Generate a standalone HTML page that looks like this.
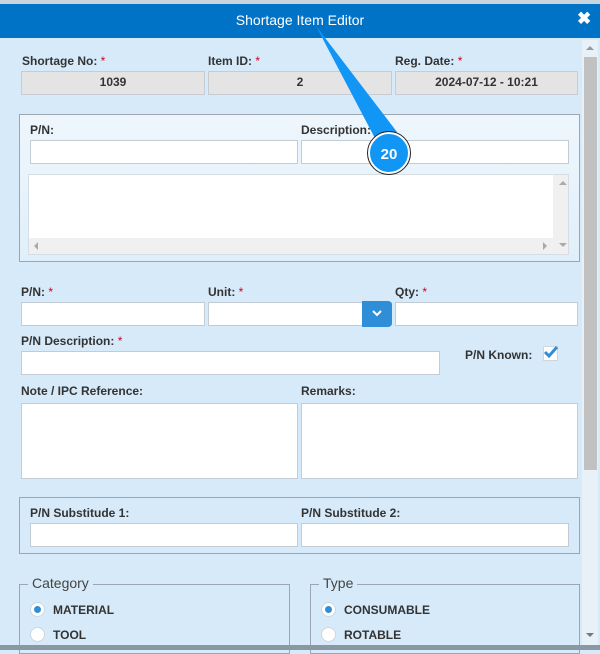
<!DOCTYPE html>
<html><head><style>
*{box-sizing:border-box;margin:0;padding:0}
body{width:600px;height:650px;overflow:hidden;background:#d6eaf9;font-family:"Liberation Sans",Arial,sans-serif;position:relative}
.a{position:absolute}
.hdr{left:0;top:0;width:600px;height:38px;background:#0073c6;border-top:4px solid #c8d4de}
.t{width:600px;text-align:center;top:12px;color:#fff;font-size:14px}
.lab{font-size:12px;font-weight:bold;color:#333}
.lab i{color:#d0021b;font-style:normal;font-weight:normal}
.in{background:#fff;border:1px solid #c3ccd4}
.ro{background:#e4e4e4;border:1px solid #c6ccd2;font-size:12px;font-weight:bold;color:#333;text-align:center;line-height:21px}
.fs{border:1px solid #9aa7b2}
.rad{width:15px;height:15px;border-radius:50%;background:#fff;border:1px solid #d0d6dc}
.rl{font-size:12px;font-weight:bold;color:#333}
</style></head><body>
<div class="a hdr"></div>
<div class="a t">Shortage Item Editor</div>
<div class="a" style="left:577px;top:9px;color:#fff;font-size:17px;font-weight:bold">✖</div>

<div class="a" style="left:582px;top:40px;width:16px;height:605px;background:#e9f1f8"></div>
<div class="a" style="left:584px;top:57px;width:13px;height:413px;background:#c1c1c1"></div>
<div class="a" style="left:586px;top:46px;width:0;height:0;border:4px solid transparent;border-bottom:4px solid #999;border-top:0"></div>
<div class="a" style="left:586px;top:633px;width:0;height:0;border:4px solid transparent;border-top:4px solid #777;border-bottom:0"></div>

<div class="a lab" style="left:22px;top:54px">Shortage No: <i>*</i></div>
<div class="a lab" style="left:208px;top:54px">Item ID: <i>*</i></div>
<div class="a lab" style="left:395px;top:54px">Reg. Date: <i>*</i></div>
<div class="a ro" style="left:21px;top:71px;width:184px;height:24px">1039</div>
<div class="a ro" style="left:208px;top:71px;width:184px;height:24px">2</div>
<div class="a ro" style="left:395px;top:71px;width:183px;height:24px">2024-07-12 - 10:21</div>

<div class="a fs" style="left:19px;top:114px;width:561px;height:148px;background:linear-gradient(#eef6fc,#e0effa)"></div>
<div class="a lab" style="left:30px;top:123px">P/N:</div>
<div class="a lab" style="left:301px;top:123px">Description:</div>
<div class="a in" style="left:30px;top:140px;width:268px;height:24px"></div>
<div class="a in" style="left:301px;top:140px;width:268px;height:24px"></div>
<div class="a" style="left:28px;top:174px;width:541px;height:81px;background:#f0f0f0;border:1px solid #d6dde3"></div>
<div class="a" style="left:29px;top:175px;width:524px;height:63px;background:#fff"></div>
<div class="a" style="left:559px;top:181px;border:4px solid transparent;border-bottom:4px solid #aaa;border-top:0"></div>
<div class="a" style="left:559px;top:243px;border:4px solid transparent;border-top:4px solid #aaa;border-bottom:0"></div>
<div class="a" style="left:34px;top:242px;border:4px solid transparent;border-right:4px solid #aaa;border-left:0"></div>
<div class="a" style="left:543px;top:242px;border:4px solid transparent;border-left:4px solid #aaa;border-right:0"></div>

<div class="a lab" style="left:21px;top:285px">P/N: <i>*</i></div>
<div class="a lab" style="left:208px;top:285px">Unit: <i>*</i></div>
<div class="a lab" style="left:395px;top:285px">Qty: <i>*</i></div>
<div class="a in" style="left:21px;top:302px;width:184px;height:24px"></div>
<div class="a in" style="left:208px;top:302px;width:184px;height:24px"></div>
<div class="a" style="left:362px;top:301px;width:30px;height:26px;background:#2f8ed8;border-radius:0 4px 4px 0;color:#fff;text-align:center">
<svg width="14" height="26" viewBox="0 0 14 26"><path d="M3 10 L7 14 L11 10" stroke="#fff" stroke-width="2" fill="none"/></svg></div>
<div class="a in" style="left:395px;top:302px;width:183px;height:24px"></div>

<div class="a lab" style="left:21px;top:334px">P/N Description: <i>*</i></div>
<div class="a in" style="left:21px;top:351px;width:419px;height:24px"></div>
<div class="a lab" style="left:465px;top:348px">P/N Known:</div>
<div class="a" style="left:543px;top:346px;width:15px;height:15px;background:#fff;border:1px solid #cfd6dc"></div>
<svg class="a" style="left:542px;top:344px" width="18" height="16" viewBox="0 0 18 16"><path d="M3 8 L7 12 L15 3" stroke="#2f8ed8" stroke-width="3" fill="none"/></svg>

<div class="a lab" style="left:21px;top:384px">Note / IPC Reference:</div>
<div class="a lab" style="left:301px;top:384px">Remarks:</div>
<div class="a in" style="left:21px;top:403px;width:277px;height:76px"></div>
<div class="a in" style="left:301px;top:403px;width:277px;height:76px"></div>

<div class="a fs" style="left:19px;top:497px;width:561px;height:57px"></div>
<div class="a lab" style="left:30px;top:506px">P/N Substitude 1:</div>
<div class="a lab" style="left:301px;top:506px">P/N Substitude 2:</div>
<div class="a in" style="left:30px;top:523px;width:268px;height:24px"></div>
<div class="a in" style="left:301px;top:523px;width:268px;height:24px"></div>

<div class="a fs" style="left:19px;top:584px;width:271px;height:70px"></div>
<div class="a" style="left:28px;top:575px;padding:0 4px;background:#d6eaf9;font-size:14px;color:#444">Category</div>
<div class="a fs" style="left:310px;top:584px;width:270px;height:70px"></div>
<div class="a" style="left:319px;top:575px;padding:0 4px;background:#d6eaf9;font-size:14px;color:#444">Type</div>
<div class="a rad" style="left:30px;top:602px"><div style="width:7px;height:7px;border-radius:50%;background:#2f8ed8;margin:3px"></div></div>
<div class="a rl" style="left:53px;top:603px">MATERIAL</div>
<div class="a rad" style="left:30px;top:627px"></div>
<div class="a rl" style="left:53px;top:628px">TOOL</div>
<div class="a rad" style="left:321px;top:602px"><div style="width:7px;height:7px;border-radius:50%;background:#2f8ed8;margin:3px"></div></div>
<div class="a rl" style="left:344px;top:603px">CONSUMABLE</div>
<div class="a rad" style="left:321px;top:627px"></div>
<div class="a rl" style="left:344px;top:628px">ROTABLE</div>

<div class="a" style="left:0;top:645px;width:600px;height:5px;background:#8a98a4"></div>

<svg class="a" style="left:0;top:0" width="600" height="200" viewBox="0 0 600 200">
<path d="M316 26 L397 132 L378 144 Z" fill="#1196f5"/>
<circle cx="389" cy="153" r="20" fill="#1196f5" stroke="#fff" stroke-width="2"/>
<circle cx="389" cy="153" r="21.5" fill="none" stroke="#222" stroke-width="1"/>
<text x="389" y="159" text-anchor="middle" font-family="Liberation Sans" font-weight="bold" font-size="15" fill="#fff">20</text>
</svg>
</body></html>
